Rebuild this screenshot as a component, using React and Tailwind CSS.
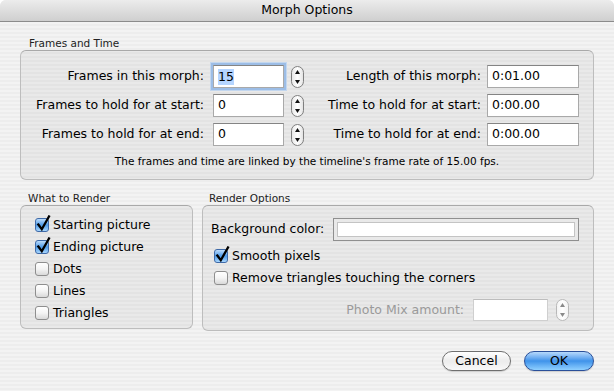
import React from "react";

function Stepper({ disabled = false }) {
  const stroke = disabled ? "#b8b8b8" : "#7f7f7f";
  const arrow = disabled ? "#8a8a8a" : "#111";
  const id = disabled ? "stepD" : "stepE";
  return (
    <svg width="13" height="22" viewBox="0 0 13 22" className="shrink-0">
      <defs>
        <linearGradient id={id} x1="0" y1="0" x2="1" y2="0">
          <stop offset="0" stopColor={disabled ? "#f2f2f2" : "#e6e6e6"} />
          <stop offset="0.5" stopColor="#ffffff" />
          <stop offset="1" stopColor={disabled ? "#f2f2f2" : "#e2e2e2"} />
        </linearGradient>
      </defs>
      <rect x="0.5" y="0.5" width="12" height="21" rx="6" fill={`url(#${id})`} stroke={stroke} />
      <path d="M6.5 4 L9 8 L4 8 Z" fill={arrow} />
      <path d="M6.5 18 L9 14 L4 14 Z" fill={arrow} />
    </svg>
  );
}

function Checkbox({ checked, label }) {
  return (
    <div className="flex items-center h-[22px]">
      <span
        className={
          checked
            ? "relative w-[14px] h-[14px] rounded-[3px] border border-[#3f6aa8] bg-gradient-to-b from-[#bcdcfb] via-[#4d9be8] to-[#a8d6fd] shrink-0"
            : "relative w-[14px] h-[14px] rounded-[3px] border border-[#8e8e8e] bg-gradient-to-b from-white via-[#f4f4f4] to-[#d9d9d9] shrink-0"
        }
      >
        {checked && (
          <svg width="16" height="17" viewBox="0 0 16 17" className="absolute left-[0px] top-[-4px]">
            <path d="M2.3 9.5 L5.8 14.2 L13 1.5" fill="none" stroke="#000" strokeWidth="2.3" strokeLinecap="square" />
          </svg>
        )}
      </span>
      <span className="ml-[4px] text-[12.5px] text-black">{label}</span>
    </div>
  );
}

function Field({ value, width, focus = false }) {
  return (
    <div
      className={
        "h-[23px] bg-white border border-[#a9a9a9] border-t-[#848484] flex items-center pl-[4px] text-[12.5px] text-black shrink-0 " +
        (focus ? "shadow-[0_0_0_2px_#9cbde6,0_0_0_3px_#c3d7ef]" : "")
      }
      style={{ width }}
    >
      {focus ? <span className="bg-[#b5d5ff] leading-[16px]">{value}</span> : value}
    </div>
  );
}

export default function App() {
  const stripes =
    "bg-[repeating-linear-gradient(180deg,#ededed_0px,#ededed_2px,#f3f3f3_2px,#f3f3f3_4px)]";
  return (
    <div className="w-[614px] h-[391px] bg-white font-['DejaVu_Sans',sans-serif] overflow-hidden">
      <div className={"w-[614px] h-[391px] rounded-t-[6px] overflow-hidden flex flex-col " + stripes}>
        {/* Title bar */}
        <div className="h-[22px] shrink-0 bg-gradient-to-b from-[#ececec] to-[#cfcfcf] border-b border-[#8c8c8c] flex items-center justify-center text-[12.5px] text-black">
          Morph Options
        </div>

        <div className="px-[20px] flex flex-col">
          {/* Frames and Time */}
          <div className="mt-[14px] h-[14px] pl-[9px] text-[10.5px] leading-[14px] text-[#222]">Frames and Time</div>
          <div className="h-[130px] rounded-[6px] border border-[#bdbdbd] border-t-[#a9a9a9] bg-[rgba(0,0,0,0.04)] flex flex-col pt-[14px]">
            {[
              ["Frames in this morph:", "15", "Length of this morph:", "0:01.00", true],
              ["Frames to hold for at start:", "0", "Time to hold for at start:", "0:00.00", false],
              ["Frames to hold for at end:", "0", "Time to hold for at end:", "0:00.00", false],
            ].map(([l1, v1, l2, v2, f], i) => (
              <div key={i} className={"flex items-center h-[23px] text-[12.5px] text-black " + (i > 0 ? "mt-[6px]" : "")}>
                <div className="w-[183px] text-right shrink-0">{l1}</div>
                <div className="ml-[9px]">
                  <Field value={v1} width={71} focus={f} />
                </div>
                <div className="ml-[7px] flex items-center">
                  <Stepper />
                </div>
                <div className="w-[177px] text-right shrink-0">{l2}</div>
                <div className="ml-[6px]">
                  <Field value={v2} width={92} />
                </div>
              </div>
            ))}
            <div className="mt-[8px] h-[14px] leading-[14px] text-[10.5px] text-black text-center">
              The frames and time are linked by the timeline's frame rate of 15.00 fps.
            </div>
          </div>

          {/* Lower groups */}
          <div className="mt-[11px] flex items-start gap-[9px]">
            <div className="w-[173px] flex flex-col">
              <div className="h-[14px] pl-[8px] text-[10.5px] leading-[14px] text-[#222]">What to Render</div>
              <div className="h-[124px] rounded-[6px] border border-[#bdbdbd] border-t-[#a9a9a9] bg-[rgba(0,0,0,0.04)] pt-[8px] pl-[14px]">
                <Checkbox checked label="Starting picture" />
                <Checkbox checked label="Ending picture" />
                <Checkbox label="Dots" />
                <Checkbox label="Lines" />
                <Checkbox label="Triangles" />
              </div>
            </div>

            <div className="flex-1 flex flex-col">
              <div className="h-[14px] pl-[7px] text-[10.5px] leading-[14px] text-[#222]">Render Options</div>
              <div className="h-[126px] rounded-[6px] border border-[#bdbdbd] border-t-[#a9a9a9] bg-[rgba(0,0,0,0.04)] pt-[12px] flex flex-col">
                <div className="flex items-center h-[23px] pl-[8px]">
                  <span className="text-[12.5px] text-black">Background color:</span>
                  <div className="ml-auto mr-[14px] w-[246px] h-[23px] border border-[#8f8f8f] bg-[#e9e9e9] p-[3px]">
                    <div className="w-full h-full bg-white border border-[#c4c4c4]"></div>
                  </div>
                </div>
                <div className="mt-[4px] pl-[11px]">
                  <Checkbox checked label="Smooth pixels" />
                  <Checkbox label="Remove triangles touching the corners" />
                </div>
                <div className="mt-[10px] flex items-center justify-end pr-[24px] h-[22px]">
                  <span className="text-[12.5px] text-[#9a9a9a]">Photo Mix amount:</span>
                  <div className="ml-[9px] w-[75px] h-[22px] bg-white border border-[#cfcfcf] border-t-[#bdbdbd]"></div>
                  <div className="ml-[8px] flex items-center">
                    <Stepper disabled />
                  </div>
                </div>
              </div>
            </div>
          </div>

          {/* Buttons */}
          <div className="mt-[20px] flex justify-end gap-[13px]">
            <button className="w-[69px] h-[20px] rounded-full border border-[#6f6f6f] bg-gradient-to-b from-white via-[#ececec] to-[#f8f8f8] text-[12.5px] text-black leading-[18px] shadow-[0_1px_1px_rgba(0,0,0,0.15)]">
              Cancel
            </button>
            <button className="w-[70px] h-[20px] rounded-full border border-[#2a4f99] bg-gradient-to-b from-[#b7d9fb] via-[#3f93ea] to-[#8fd0ff] text-[12.5px] text-black leading-[18px] shadow-[0_1px_1px_rgba(0,0,0,0.15)]">
              OK
            </button>
          </div>
        </div>
      </div>
    </div>
  );
}
